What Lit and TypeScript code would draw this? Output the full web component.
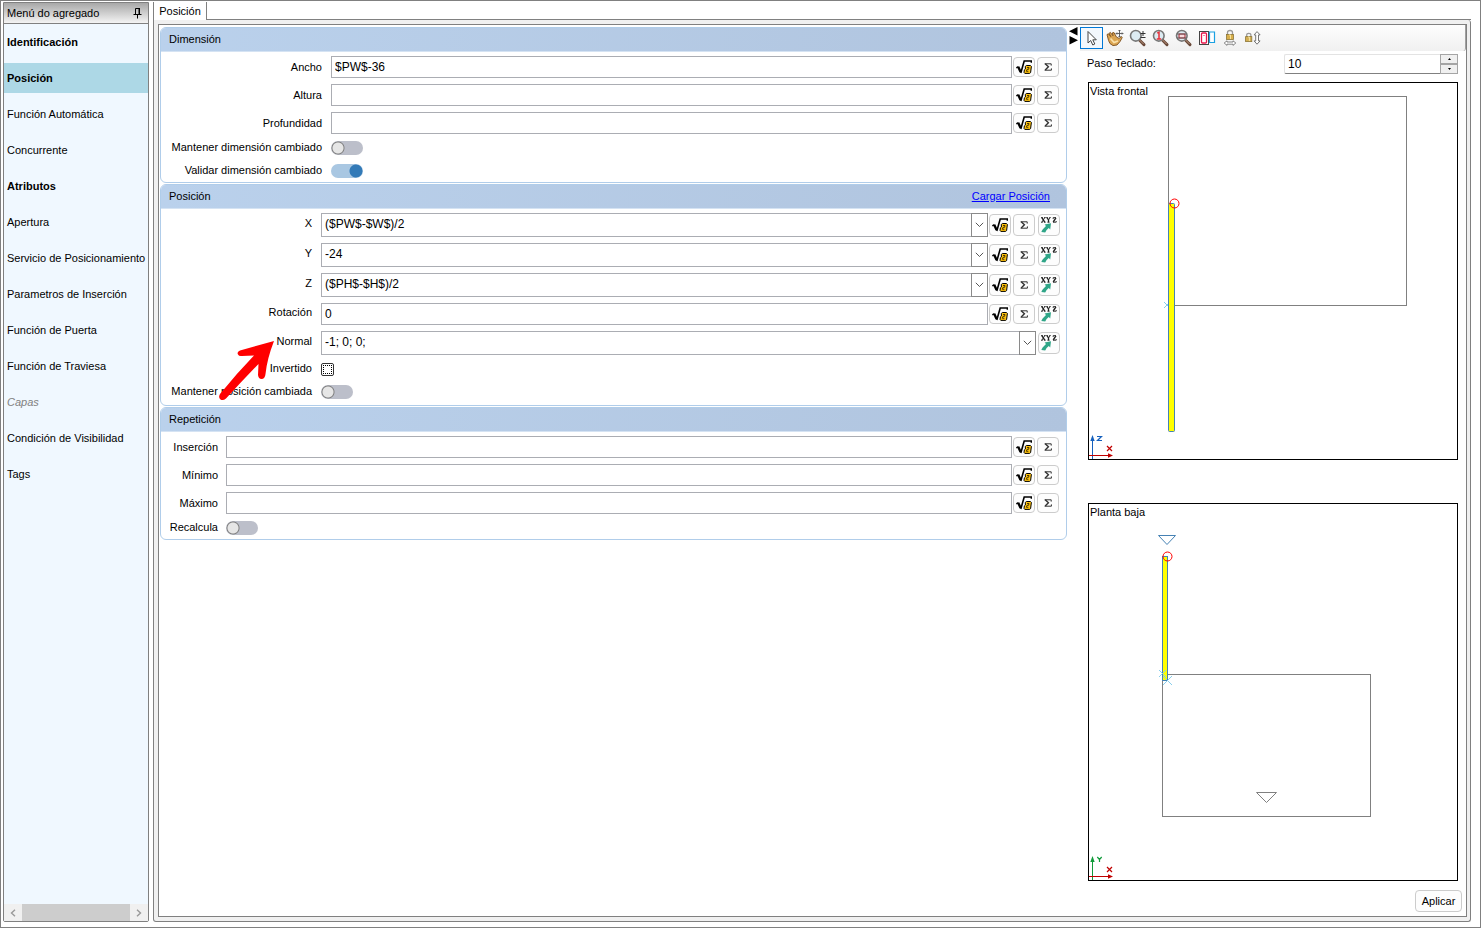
import { LitElement, html, css, svg, nothing } from "lit";
import { customElement, state } from "lit/decorators.js";
import { classMap } from "lit/directives/class-map.js";

interface MenuItem {
  text: string;
  kind?: "bold" | "disabled";
}

const MENU: MenuItem[] = [
  { text: "Identificación", kind: "bold" },
  { text: "Posición", kind: "bold" },
  { text: "Función Automática" },
  { text: "Concurrente" },
  { text: "Atributos", kind: "bold" },
  { text: "Apertura" },
  { text: "Servicio de Posicionamiento" },
  { text: "Parametros de Inserción" },
  { text: "Función de Puerta" },
  { text: "Función de Traviesa" },
  { text: "Capas", kind: "disabled" },
  { text: "Condición de Visibilidad" },
  { text: "Tags" },
];

const rootIcon = html`<svg width="16" height="14" viewBox="0 0 16 14" aria-hidden="true">
  <path d="M.3 7.8 L2.4 6.6" fill="none" stroke="#000" stroke-width="1.4" />
  <path d="M2.2 6.8 L4.6 12" fill="none" stroke="#000" stroke-width="2.4" />
  <path d="M4.8 13 L8.2 1 H15.4 V2.8" fill="none" stroke="#000" stroke-width="1.6" />
  <path d="M9.3 6.4 L10.4 5.5 H14.4 L15.4 6.4 L14.6 12.6 L13.6 13.4 H8.8 L8 12.4 L8.4 9.8 L9.4 9 Z" fill="#ffc20e" stroke="#000" stroke-width="1" />
  <path d="M11 7.5 H13 L12.6 9.3 H11 L10.4 11.3 H12.4" fill="none" stroke="#3a2b00" stroke-width=".9" />
</svg>`;

const sigmaIcon = html`<svg width="8" height="8" viewBox="0 0 8 8" aria-hidden="true">
  <path d="M7.2 2.6 V.8 H.6 M.6 7.2 H7.4 V5.4" fill="none" stroke="#333" stroke-width="1" />
  <path d="M1.2 .8 L4.4 3.8 L1.2 7" fill="none" stroke="#333" stroke-width="1.4" />
</svg>`;

const xyzIcon = html`<svg width="16" height="16" viewBox="0 0 16 16" aria-hidden="true">
  <g fill="none" stroke="#222">
    <path d="M.9 .6 L3.7 5.2" stroke-width="1.4" />
    <path d="M3.8 .6 L.9 5.2 M0 .6 H1.8 M3 .6 H4.7 M0 5.2 H1.8 M3 5.2 H4.7" stroke-width=".9" />
    <path d="M6 .6 L7.5 3 V5.2" stroke-width="1.3" />
    <path d="M9 .6 L7.5 3 M5.2 .6 H6.8 M8.2 .6 H9.7 M6.4 5.2 H8.6" stroke-width=".9" />
    <path d="M12.2 2 V.6 H15 M12 5.2 H15.2 V4" stroke-width=".9" />
    <path d="M14.9 .8 L12.2 5" stroke-width="1.4" />
  </g>
  <path d="M3.6 7.6 L10 6.2 L9.2 12.4 L7.8 11 Q5 13 4.2 15.4 L.4 15 Q.6 13 5 9 Z" fill="#2fa587" />
</svg>`;

const chevron = html`<svg width="9" height="6" viewBox="0 0 9 6" aria-hidden="true">
  <path d="M.8 .8 L4.5 4.5 L8.2 .8" fill="none" stroke="#555" stroke-width="1" />
</svg>`;

const lens = svg`
  <path d="M10.4 11 L15 15.6" stroke="#6b4a3a" stroke-width="3" stroke-linecap="round" />
  <path d="M10.6 11 L14.6 15" stroke="#b8937c" stroke-width="1" />
  <circle cx="6.8" cy="6.8" r="5.3" fill="#dcebf2" stroke="#777" stroke-width="1.6" />`;

const TOOLS = [
  {
    name: "Seleccionar",
    icon: html`<svg width="16" height="18" viewBox="0 0 16 18">
      <path d="M4 2.5 V14 L6.7 11.5 L8.8 16 L10.8 15 L8.8 10.8 H12.3 Z" fill="#fff" stroke="#444" stroke-width="1" />
    </svg>`,
  },
  {
    name: "Desplazar",
    icon: html`<svg width="18" height="18" viewBox="0 0 18 18">
      <path d="M1 5.6 L2.4 4.8 L4.8 7.6 L3 4.4 L4.4 3.4 L7 6.8 L6.4 3.8 L8 3.6 L10.4 8 L13 9.4 L15.6 7.6 L16.2 8.6 L14 12.6 L11 16 L7 16.6 L4 14.6 L2.6 11.6 Z" fill="#dba552" stroke="#7c4e1c" stroke-width=".9" />
      <path d="M4.5 9.5 L8 13.5 L12 12" fill="none" stroke="#f9e0a8" stroke-width="1.8" />
      <path d="M13.5 1 V8 M10 4.5 H17 M12.5 2 L13.5 1 L14.5 2 M12.5 7 L13.5 8 L14.5 7 M11 3.5 L10 4.5 L11 5.5 M16 3.5 L17 4.5 L16 5.5" fill="none" stroke="#555" stroke-width=".9" />
    </svg>`,
  },
  {
    name: "Zoom",
    icon: html`<svg width="18" height="18" viewBox="0 0 18 18">
      ${lens}
      <path d="M11.5 4.5 H16.5 M14 2 V7 M11.5 8.5 H16.5" fill="none" stroke="#333" stroke-width="1" />
    </svg>`,
  },
  {
    name: "Zoom 1:1",
    icon: html`<svg width="18" height="18" viewBox="0 0 18 18">
      ${lens}
      <path d="M5.2 4.2 L7 3.2 V10 M4.8 10 H9.2" fill="none" stroke="#e8303a" stroke-width="1.5" />
    </svg>`,
  },
  {
    name: "Zoom ventana",
    icon: html`<svg width="18" height="18" viewBox="0 0 18 18">
      ${lens}
      <rect x="4" y="5" width="6" height="4" fill="#f7d9dc" stroke="#a8202c" />
      <path d="M2 5 H11.5 M2 9 H11.5" stroke="#555" stroke-width=".8" />
    </svg>`,
  },
  {
    name: "Vistas",
    icon: html`<svg width="18" height="18" viewBox="0 0 18 18">
      <rect x="1.5" y="2.5" width="9" height="13" fill="#fff" stroke="#444" />
      <rect x="3.5" y="4" width="5" height="10" rx="1" fill="#fff" stroke="#e6174b" stroke-width="1.3" />
      <path d="M5.5 6.5 H6.5" stroke="#e6174b" />
      <path d="M11.5 3 H16.5 V13.5 H11.5 Z" fill="#fff" stroke="#1ba1e2" stroke-width="1.2" />
    </svg>`,
  },
  {
    name: "Bloqueo horizontal",
    icon: html`<svg width="18" height="18" viewBox="0 0 18 18">
      <path d="M6.5 6 V3.5 Q6.5 1.5 9 1.5 Q11.5 1.5 11.5 3.5 V6" fill="none" stroke="#999" stroke-width="1.3" />
      <rect x="5.5" y="5.5" width="7" height="5" fill="#d9b04c" stroke="#8c7637" stroke-width=".8" />
      <path d="M8 6 H9.5 V10" stroke="#f5e3a0" fill="none" />
      <path d="M3.2 14 L6 11.8 V13 H12 V11.8 L14.8 14 L12 16.4 V15.2 H6 V16.4 Z" fill="#fff" stroke="#777" stroke-width=".9" />
    </svg>`,
  },
  {
    name: "Bloqueo vertical",
    icon: html`<svg width="18" height="18" viewBox="0 0 18 18">
      <path d="M2.7 8 V6 Q2.7 4.4 4.8 4.4 Q6.9 4.4 6.9 6 V8" fill="none" stroke="#999" stroke-width="1.2" />
      <rect x="1.6" y="7.6" width="6.2" height="5" fill="#d3ae52" stroke="#8c7637" stroke-width=".8" />
      <path d="M4 8 H5.4 V12" stroke="#f5e3a0" fill="none" />
      <path d="M13 2.6 L16.1 5.9 H14.5 V11.9 H16.1 L13 15.2 L10.1 11.9 H11.7 V5.9 H10.1 Z" fill="#fff" stroke="#666" stroke-width=".9" />
    </svg>`,
  },
];

@customElement("app-root")
export class AppRoot extends LitElement {
  @state() private selected = "Posición";

  static styles = css`
    :host {
      display: block;
      height: 100vh;
      font: 11px/14px "Liberation Sans", Arial, sans-serif;
      color: #000;
    }
    * {
      box-sizing: border-box;
    }
    button,
    input {
      font: inherit;
      color: inherit;
      margin: 0;
    }
    button {
      padding: 0;
    }
    svg {
      display: block;
      flex: none;
    }
    .window {
      height: 100%;
      min-height: 600px;
      display: flex;
      gap: 4px;
      padding: 1px 9px 5px 2px;
      border: 1px solid #808080;
      background: #fff;
    }

    /* side menu */
    .side {
      flex: none;
      width: 146px;
      display: flex;
      flex-direction: column;
      border: 1px solid #808080;
      border-radius: 0 0 2px 2px;
      background: #f0f8ff;
    }
    .side-title {
      display: flex;
      align-items: center;
      justify-content: space-between;
      height: 21px;
      padding: 0 6px 0 3px;
      border-bottom: 1px solid #808080;
      background: linear-gradient(#a8a8a8, #f4f4f4);
    }
    .menu {
      flex: 1;
      margin: 0;
      padding: 3px 0;
      display: flex;
      flex-direction: column;
      gap: 6px;
      list-style: none;
      overflow: hidden;
    }
    .menu-item {
      display: block;
      width: 100%;
      height: 30px;
      padding: 0 3px;
      border: 0;
      background: none;
      text-align: left;
      white-space: nowrap;
    }
    .menu-item.bold {
      font-weight: bold;
    }
    .menu-item.disabled {
      color: #808080;
      font-style: italic;
    }
    .menu-item.active {
      background: #add8e6;
    }
    .scroll {
      display: flex;
      height: 17px;
      background: #f0f0f0;
    }
    .scroll-btn {
      flex: none;
      width: 18px;
      display: grid;
      place-items: center;
      border: 0;
      background: none;
    }
    .thumb {
      flex: 1;
      background: #cdcdcd;
    }

    /* tabbed area */
    .main {
      flex: 1;
      min-width: 0;
      display: flex;
      flex-direction: column;
    }
    .tabs {
      flex: none;
      height: 18px;
      display: flex;
      border-left: 1px solid #808080;
    }
    .tab {
      width: 53px;
      border: 0;
      border-right: 1px solid #808080;
      background: #fff;
    }
    .tab-rest {
      flex: 1;
      border-bottom: 1px solid #808080;
    }
    .sheet {
      flex: 1;
      min-height: 0;
      padding: 4px 3px 4px 4px;
      border: 1px solid #808080;
      border-top: 0;
      border-radius: 0 3px 3px 3px;
      background: linear-gradient(#fff, #fff) content-box, #f0f0f0;
    }
    .sheet-inner {
      height: 100%;
      display: flex;
      border: 1px solid #808080;
      background: #fff;
    }

    /* form */
    .form {
      flex: 1;
      min-width: 0;
      display: flex;
      flex-direction: column;
      gap: 1px;
      padding: 2px 1px;
    }
    .group {
      position: relative;
      margin: 0;
      border: 1px solid #b0cdea;
      border-radius: 6px;
    }
    .group-head {
      display: flex;
      align-items: center;
      justify-content: space-between;
      height: 24px;
      margin: 0;
      padding: 0 16px 2px 8px;
      border-bottom: 1px solid #d5e3f3;
      border-radius: 5px 5px 0 0;
      background: linear-gradient(90deg, #bad1ec, #b0c4de);
      font: inherit;
    }
    .link {
      color: #00f;
      text-decoration: underline;
    }
    .rows {
      padding: 1px 7px 0 7px;
    }
    .row {
      display: grid;
      grid-template-columns: var(--label) minmax(0, 1fr) auto;
      column-gap: 9px;
      align-items: center;
      height: 28px;
    }
    .size {
      --label: 154px;
    }
    .position {
      --label: 144px;
    }
    .position .rows {
      padding: 1px 6px 2px 7px;
    }
    .position .label {
      padding-bottom: 4px;
    }
    .repeat {
      --label: 50px;
    }
    .repeat .row {
      column-gap: 8px;
    }
    .row.tall {
      height: 30px;
    }
    .row.low {
      height: 22px;
    }
    .row.low .label {
      padding-bottom: 2px;
    }
    .row.low + .row.low {
      margin-top: 1px;
    }
    .label {
      text-align: right;
      white-space: nowrap;
    }
    .field {
      display: flex;
      height: 22px;
      border: 1px solid #abadb3;
      background: #fff;
    }
    .tall .field {
      height: 24px;
    }
    .text {
      flex: 1;
      min-width: 0;
      width: 100%;
      padding: 0 3px 1px;
      border: 0;
      outline: 0;
      background: none;
      font-size: 12px;
    }
    .tall .text {
      padding-bottom: 3px;
    }
    .drop {
      flex: none;
      width: 17px;
      display: grid;
      place-items: center;
      margin: -1px;
      border: 1px solid #8a8a8a;
      background: #fff;
    }
    .actions {
      display: flex;
      gap: 2px;
      margin-left: -8px;
    }
    .repeat .actions {
      margin-left: -7px;
    }
    .action {
      width: 22px;
      height: 20px;
      display: grid;
      place-items: center;
      border: 1px solid #ccc;
      border-radius: 4px;
      background: #fdfdfd;
    }
    .tall .action {
      height: 22px;
    }
    .action.xyz {
      margin-left: 1px;
    }
    .switch {
      appearance: none;
      width: 32px;
      height: 14px;
      border-radius: 7px;
      background: radial-gradient(circle at 7px 7px, #e6e6e6 5px, #808080 6px, #808080 6px, transparent 7px), #bcbfca;
    }
    .switch:checked {
      background: radial-gradient(circle at 25px 7px, #337ab7 6px, transparent 7px), #a9c7e2;
    }
    .tick {
      appearance: none;
      width: 13px;
      height: 13px;
      border: 1px solid #333;
      border-radius: 2px;
      background: #fff;
      outline: 1px dotted #000;
      outline-offset: -3px;
    }
    .pointer {
      position: absolute;
      left: 56px;
      top: 153px;
      pointer-events: none;
    }

    /* views */
    .splitter {
      flex: none;
      width: 12px;
      padding: 2px 0 0 1px;
    }
    .views {
      flex: none;
      width: 386px;
      display: flex;
      flex-direction: column;
    }
    .toolbar {
      flex: none;
      display: flex;
      height: 26px;
      padding: 2px 0;
      border-right: 1px solid #a0a0a0;
      border-radius: 0 0 3px 0;
      background: linear-gradient(#fdfdfd, #f0f0f0);
    }
    .tool {
      width: 23px;
      height: 22px;
      display: grid;
      place-items: center;
      border: 1px solid transparent;
      background: none;
    }
    .tool.on {
      border-color: #0078d7;
      background: #f3f8fd;
    }
    .view-body {
      flex: 1;
      min-height: 0;
      display: flex;
      flex-direction: column;
      padding: 3px 8px 0 8px;
    }
    .step {
      display: grid;
      grid-template-columns: 197px 1fr;
      margin: 0 0 8px -1px;
    }
    .step-box {
      display: flex;
      height: 20px;
      border: 1px solid #e3e3e3;
      border-bottom-color: #808080;
      border-right: 0;
      border-radius: 2px;
    }
    .step-label {
      padding-top: 2px;
    }
    .spin {
      flex: none;
      width: 18px;
      display: grid;
      margin: -1px 0;
    }
    .spin-btn {
      display: grid;
      place-items: center;
      height: 10px;
      border: 1px solid #a5a5a5;
      background: #f0f0f0;
    }
    .view {
      flex: 1;
      min-height: 0;
      margin: 0 0 43px;
      border: 1px solid #000;
      overflow: hidden;
    }
    .view.last {
      margin-bottom: 9px;
    }
    .drawing {
      width: 100%;
      height: 100%;
    }
    .caption {
      font-size: 11px;
    }
    .foot {
      flex: none;
      display: flex;
      justify-content: flex-end;
      padding: 0 4px 4px 0;
    }
    .apply {
      width: 47px;
      height: 22px;
      border: 1px solid #ccc;
      border-radius: 4px;
      background: #fdfdfd;
    }
  `;

  private field(
    id: string,
    label: string,
    value: string,
    opts: { combo?: boolean; formula?: boolean; xyz?: boolean } = {}
  ) {
    const { combo = false, formula = true, xyz = false } = opts;
    return html`<div class=${classMap({ row: true, tall: combo })}>
      <label class="label" for=${id}>${label}</label>
      <div class="field">
        <input class="text" id=${id} type="text" .value=${value} />
        ${combo ? html`<button class="drop" aria-label="Abrir lista">${chevron}</button>` : nothing}
      </div>
      <div class="actions">
        ${formula
          ? html`<button class="action" aria-label="Fórmula">${rootIcon}</button>
              <button class="action" aria-label="Suma">${sigmaIcon}</button>`
          : nothing}
        ${xyz ? html`<button class="action xyz" aria-label="XYZ">${xyzIcon}</button>` : nothing}
      </div>
    </div>`;
  }

  private toggle(id: string, label: string, on = false) {
    return html`<div class="row low">
      <label class="label" for=${id}>${label}</label>
      <input class="switch" id=${id} type="checkbox" role="switch" .checked=${on} />
    </div>`;
  }

  private sideMenu() {
    return html`<nav class="side">
      <div class="side-title">
        <span>Menú do agregado</span>
        <svg width="9" height="12" viewBox="0 0 9 12" aria-hidden="true">
          <path d="M2.5 7 V1.5 H6 V7 M6.5 1 V7 M.5 7.5 H8.5 M4.5 8 V11.5" fill="none" stroke="#000" />
        </svg>
      </div>
      <ul class="menu">
        ${MENU.map(
          (m) => html`<li>
            <button
              class=${classMap({
                "menu-item": true,
                bold: m.kind === "bold",
                disabled: m.kind === "disabled",
                active: m.text === this.selected,
              })}
              @click=${() => (this.selected = m.text)}
            >${m.text}</button>
          </li>`
        )}
      </ul>
      <div class="scroll">
        <button class="scroll-btn" aria-label="Izquierda">
          <svg width="6" height="8" viewBox="0 0 6 8"><path d="M5 .8 L1.5 4 L5 7.2" fill="none" stroke="#999" stroke-width="1.4" /></svg>
        </button>
        <div class="thumb"></div>
        <button class="scroll-btn" aria-label="Derecha">
          <svg width="6" height="8" viewBox="0 0 6 8"><path d="M1 .8 L4.5 4 L1 7.2" fill="none" stroke="#999" stroke-width="1.4" /></svg>
        </button>
      </div>
    </nav>`;
  }

  private form() {
    return html`<div class="form">
      <section class="group size">
        <h2 class="group-head">Dimensión</h2>
        <div class="rows">
          ${this.field("ancho", "Ancho", "$PW$-36")}
          ${this.field("altura", "Altura", "")}
          ${this.field("profundidad", "Profundidad", "")}
          ${this.toggle("mantener-dim", "Mantener dimensión cambiado")}
          ${this.toggle("validar-dim", "Validar dimensión cambiado", true)}
        </div>
      </section>
      <section class="group position">
        <h2 class="group-head">
          <span>Posición</span>
          <a class="link" href="#cargar">Cargar Posición</a>
        </h2>
        <div class="rows">
          ${this.field("x", "X", "($PW$-$W$)/2", { combo: true, xyz: true })}
          ${this.field("y", "Y", "-24", { combo: true, xyz: true })}
          ${this.field("z", "Z", "($PH$-$H$)/2", { combo: true, xyz: true })}
          ${this.field("rotacion", "Rotación", "0", { xyz: true })}
          ${this.field("normal", "Normal", "-1; 0; 0;", { combo: true, formula: false, xyz: true })}
          <div class="row low">
            <label class="label" for="invertido">Invertido</label>
            <input class="tick" id="invertido" type="checkbox" />
          </div>
          ${this.toggle("mantener-pos", "Mantener posición cambiada")}
        </div>
        <svg class="pointer" width="62" height="64" viewBox="0 0 62 64" aria-hidden="true">
          <path
            d="M57 3 L23 12.5 Q19.5 14 21 16.5 Q22 18.5 25 18 L37 17.5 Q20 35 3 56 Q1 59.5 3.5 61.5 Q6 63 9 60.5 Q25 43 41.5 26 L41 37 Q41.5 41 44.5 41 Q48 41 48.5 36 Q50 21 57 3 Z"
            fill="#f00"
          />
        </svg>
      </section>
      <section class="group repeat">
        <h2 class="group-head">Repetición</h2>
        <div class="rows">
          ${this.field("insercion", "Inserción", "")}
          ${this.field("minimo", "Mínimo", "")}
          ${this.field("maximo", "Máximo", "")}
          ${this.toggle("recalcula", "Recalcula")}
        </div>
      </section>
    </div>`;
  }

  private frontView() {
    return html`<div class="view">
      <svg class="drawing" viewBox="0 0 368 376" preserveAspectRatio="xMinYMin meet">
        <text class="caption" x="1" y="12">Vista frontal</text>
        <rect x="79.5" y="13.5" width="238" height="209" fill="none" stroke="#808080" />
        <path d="M75 219 L81 225 M75 225 L81 219" stroke="#87ceeb" />
        <rect x="79.5" y="120.5" width="6" height="228" rx="1" fill="#ff0" stroke="#4682b4" />
        <circle cx="85.5" cy="120.5" r="4.5" fill="none" stroke="#f00" />
        <path d="M3.5 376 V355" stroke="#1560bd" />
        <path d="M1.3 358 L3.5 352 L5.7 358 Z" fill="#1560bd" />
        <path d="M8 353.5 H12.5 L8.5 357.5 H13" fill="none" stroke="#1560bd" stroke-width="1.2" />
        <path d="M0 372.5 H20" stroke="#c00000" />
        <path d="M19 370.3 L24 372.5 L19 374.7 Z" fill="#c00000" />
        <path d="M18 363 L23 368 M18 368 L23 363" stroke="#c00000" stroke-width="1.2" />
      </svg>
    </div>`;
  }

  private topView() {
    return html`<div class="view last">
      <svg class="drawing" viewBox="0 0 368 376" preserveAspectRatio="xMinYMin meet">
        <text class="caption" x="1" y="12">Planta baja</text>
        <path d="M69.5 31.5 H86.5 L78 40.5 Z" fill="none" stroke="#4682b4" />
        <rect x="73.5" y="170.5" width="208" height="142" fill="none" stroke="#808080" />
        <rect x="73.5" y="52.5" width="5" height="124" fill="#ff0" stroke="#4682b4" />
        <path d="M70 166 L77 173 M70 173 L77 166 M74 172 L83 181 M74 181 L83 172" stroke="#87ceeb" />
        <circle cx="78.5" cy="52.5" r="4.5" fill="none" stroke="#f00" />
        <path d="M167.5 288.5 H187.5 L177.5 298.5 Z" fill="none" stroke="#808080" />
        <path d="M3.5 376 V355" stroke="#109b3a" />
        <path d="M1.3 358 L3.5 352 L5.7 358 Z" fill="#109b3a" />
        <path d="M8.3 353 L10.5 355.5 L12.7 353 M10.5 355 V358" fill="none" stroke="#109b3a" stroke-width="1.2" />
        <path d="M0 372.5 H20" stroke="#c00000" />
        <path d="M19 370.3 L24 372.5 L19 374.7 Z" fill="#c00000" />
        <path d="M18 363 L23 368 M18 368 L23 363" stroke="#c00000" stroke-width="1.2" />
      </svg>
    </div>`;
  }

  render() {
    return html`<div class="window">
      ${this.sideMenu()}
      <main class="main">
        <div class="tabs">
          <button class="tab">Posición</button>
          <div class="tab-rest"></div>
        </div>
        <div class="sheet">
          <div class="sheet-inner">
            ${this.form()}
            <div class="splitter">
              <svg width="9" height="18" viewBox="0 0 9 18" aria-hidden="true">
                <path d="M8.5 0 V8.5 L0 4.2 Z M.5 9 V17.5 L9 13.2 Z" fill="#000" />
              </svg>
            </div>
            <div class="views">
              <div class="toolbar" role="toolbar">
                ${TOOLS.map(
                  (t, i) => html`<button class=${classMap({ tool: true, on: i === 0 })} aria-label=${t.name}>
                    ${t.icon}
                  </button>`
                )}
              </div>
              <div class="view-body">
                <div class="step">
                  <label class="step-label" for="paso">Paso Teclado:</label>
                  <div class="step-box">
                    <input class="text" id="paso" type="text" inputmode="numeric" .value=${"10"} />
                    <div class="spin">
                      <button class="spin-btn" aria-label="Aumentar">
                        <svg width="3" height="2" viewBox="0 0 3 2"><path d="M0 2 L1.5 0 L3 2 Z" /></svg>
                      </button>
                      <button class="spin-btn" aria-label="Disminuir">
                        <svg width="3" height="2" viewBox="0 0 3 2"><path d="M0 0 L1.5 2 L3 0 Z" /></svg>
                      </button>
                    </div>
                  </div>
                </div>
                ${this.frontView()} ${this.topView()}
              </div>
              <div class="foot"><button class="apply">Aplicar</button></div>
            </div>
          </div>
        </div>
      </main>
    </div>`;
  }
}
